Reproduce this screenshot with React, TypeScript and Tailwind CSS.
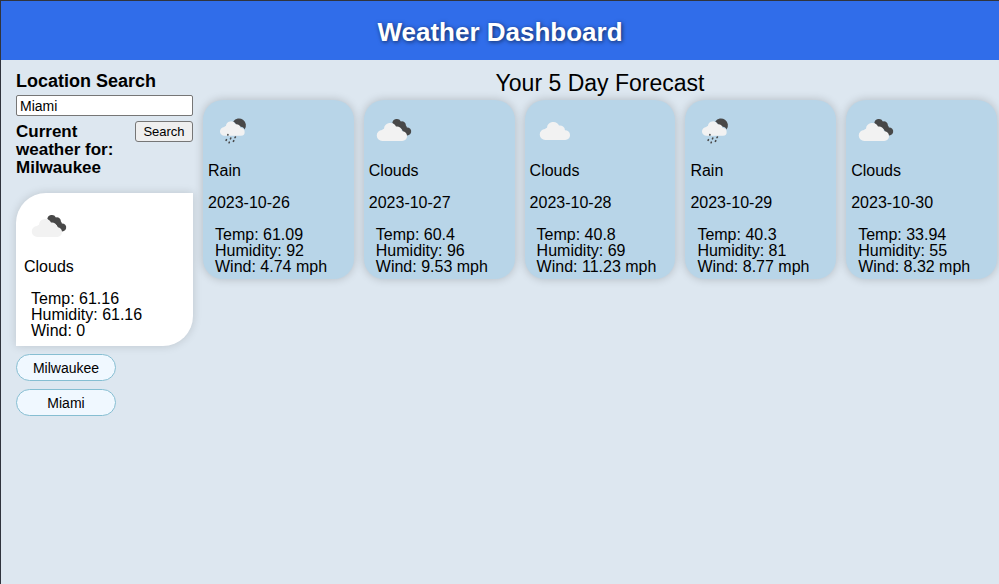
import { useState } from "react";
import type { FormEvent } from "react";

type IconKind = "rain" | "broken" | "scattered";

interface Day {
  icon: IconKind;
  condition: string;
  date: string;
  temp: string;
  humidity: string;
  wind: string;
}

const forecast: Day[] = [
  { icon: "rain", condition: "Rain", date: "2023-10-26", temp: "61.09", humidity: "92", wind: "4.74" },
  { icon: "broken", condition: "Clouds", date: "2023-10-27", temp: "60.4", humidity: "96", wind: "9.53" },
  { icon: "scattered", condition: "Clouds", date: "2023-10-28", temp: "40.8", humidity: "69", wind: "11.23" },
  { icon: "rain", condition: "Rain", date: "2023-10-29", temp: "40.3", humidity: "81", wind: "8.77" },
  { icon: "broken", condition: "Clouds", date: "2023-10-30", temp: "33.94", humidity: "55", wind: "8.32" },
];

const cities = ["Milwaukee", "Miami"];

const cloud =
  "M13.5 36a5.5 5.5 0 0 1-.5-11 5 5 0 0 1 2-1.2 6.3 6.3 0 0 1 12-2.2 5 5 0 0 1 6 4.6 4.9 4.9 0 0 1 .3 9.8z";

function WeatherIcon({ kind }: { kind: IconKind }) {
  return (
    <svg className="block size-[50px]" viewBox="0 0 50 50" role="img" aria-label={kind}>
      {kind === "broken" && (
        <path
          d="M23.3 18a4.6 4.6 0 0 1 8.6-1.6 4 4 0 0 1 5 4.2 4.1 4.1 0 0 1 1 1.8 4 4 0 1 1-1.6 7.5c-.8-.3-1.5-1.2-2.1-2.3a5.6 5.6 0 0 0-4.3-4.7 6 6 0 0 0-3.5-.7 7 7 0 0 0-3.1-4.2z"
          fill="#484848"
        />
      )}
      {kind === "rain" && (
        <>
          <path
            d="M25.2 16.4a6.8 6.8 0 1 1 11.4 8.2c-.8-1.8-2-2.7-3.8-2.8a4.5 4.5 0 0 0-4.2-1.2 6.5 6.5 0 0 0-3.4-4.2z"
            fill="#484848"
          />
          <path
            d="M16.5 30.8a4.4 4.4 0 0 1-.3-8.8 4 4 0 0 1 1.7-.9 5.1 5.1 0 0 1 9.7-1.8 4 4 0 0 1 4.9 3.7 3.9 3.9 0 0 1 .5 7.8z"
            fill="#f2f2f2"
          />
          <path
            d="M19.9 29.6v.5M22.8 33l-.3.8M27.4 32l-.4.6M18.5 34.6l-.4.8M25.8 35.6l-.4.8M21.3 37.2l-.2.5"
            stroke="#484848"
            strokeWidth="1.6"
            strokeLinecap="round"
          />
        </>
      )}
      {kind !== "rain" && <path d={cloud} fill="#f2f2f2" transform={kind === "scattered" ? "translate(2 -1)" : undefined} />}
    </svg>
  );
}

function ForecastCard({ day }: { day: Day }) {
  return (
    <article className="min-w-0 flex-1 rounded-[20px] bg-[#b8d5e8] p-[5px] pb-1 shadow-[0_0_10px_rgba(0,0,0,0.2)]">
      <WeatherIcon kind={day.icon} />
      <p className="mt-2">{day.condition}</p>
      <p className="mt-4">{day.date}</p>
      <ul className="mt-4 pl-[7px]">
        <li>Temp: {day.temp}</li>
        <li>Humidity: {day.humidity}</li>
        <li>Wind: {day.wind} mph</li>
      </ul>
    </article>
  );
}

export default function App() {
  const [query, setQuery] = useState("Miami");
  const onSubmit = (event: FormEvent) => event.preventDefault();

  return (
    <div className="min-h-screen border-t border-l border-[#30343d] bg-[#dde7f0] font-['Liberation_Sans',Arial,sans-serif] text-base leading-4 text-black">
      <header className="flex h-[59px] items-center justify-center bg-[#306dea] pt-[3px]">
        <h1 className="text-[26px] leading-8 font-bold text-white [text-shadow:1px_1px_4px_rgba(0,0,0,0.6)]">
          Weather Dashboard
        </h1>
      </header>
      <div className="flex">
        <aside className="w-[192px] shrink-0 pt-3 pl-[15px]">
          <form onSubmit={onSubmit}>
            <label htmlFor="city" className="block text-lg leading-[18px] font-bold">
              Location Search
            </label>
            <input
              id="city"
              value={query}
              onChange={(event) => setQuery(event.target.value)}
              className="mt-[5px] block h-[21px] w-full rounded-[2px] border border-[#767676] bg-white px-[3px] text-sm leading-4"
            />
            <div className="mt-[5px] flex items-start justify-between">
              <h2 className="w-[110px] pt-0.5 text-[17px] leading-[18px] font-bold">Current weather for: Milwaukee</h2>
              <button
                type="submit"
                className="h-[21px] w-[58px] rounded-[3px] border border-[#767676] bg-[#efefef] text-[13px] leading-4"
              >
                Search
              </button>
            </div>
          </form>
          <section className="mt-4 rounded-tl-[30px] rounded-br-[30px] bg-white p-2 pb-[7px] shadow-[0_0_10px_rgba(0,0,0,0.15)]">
            <WeatherIcon kind="broken" />
            <p className="mt-2">Clouds</p>
            <ul className="mt-4 pl-[7px]">
              <li>Temp: 61.16</li>
              <li>Humidity: 61.16</li>
              <li>Wind: 0</li>
            </ul>
          </section>
          <div className="mt-2 flex flex-col gap-2">
            {cities.map((city) => (
              <button
                key={city}
                type="button"
                onClick={() => setQuery(city)}
                className="h-[27px] w-[100px] rounded-full border border-[#86bed2] bg-[#f0f8ff] text-sm leading-4"
              >
                {city}
              </button>
            ))}
          </div>
        </aside>
        <main className="min-w-0 flex-1 pt-[11px] pr-0.5 pl-[10px]">
          <h2 className="text-center text-[23px] leading-6">Your 5 Day Forecast</h2>
          <div className="mt-[5px] flex gap-[10px]">
            {forecast.map((day) => (
              <ForecastCard key={day.date} day={day} />
            ))}
          </div>
        </main>
      </div>
    </div>
  );
}
